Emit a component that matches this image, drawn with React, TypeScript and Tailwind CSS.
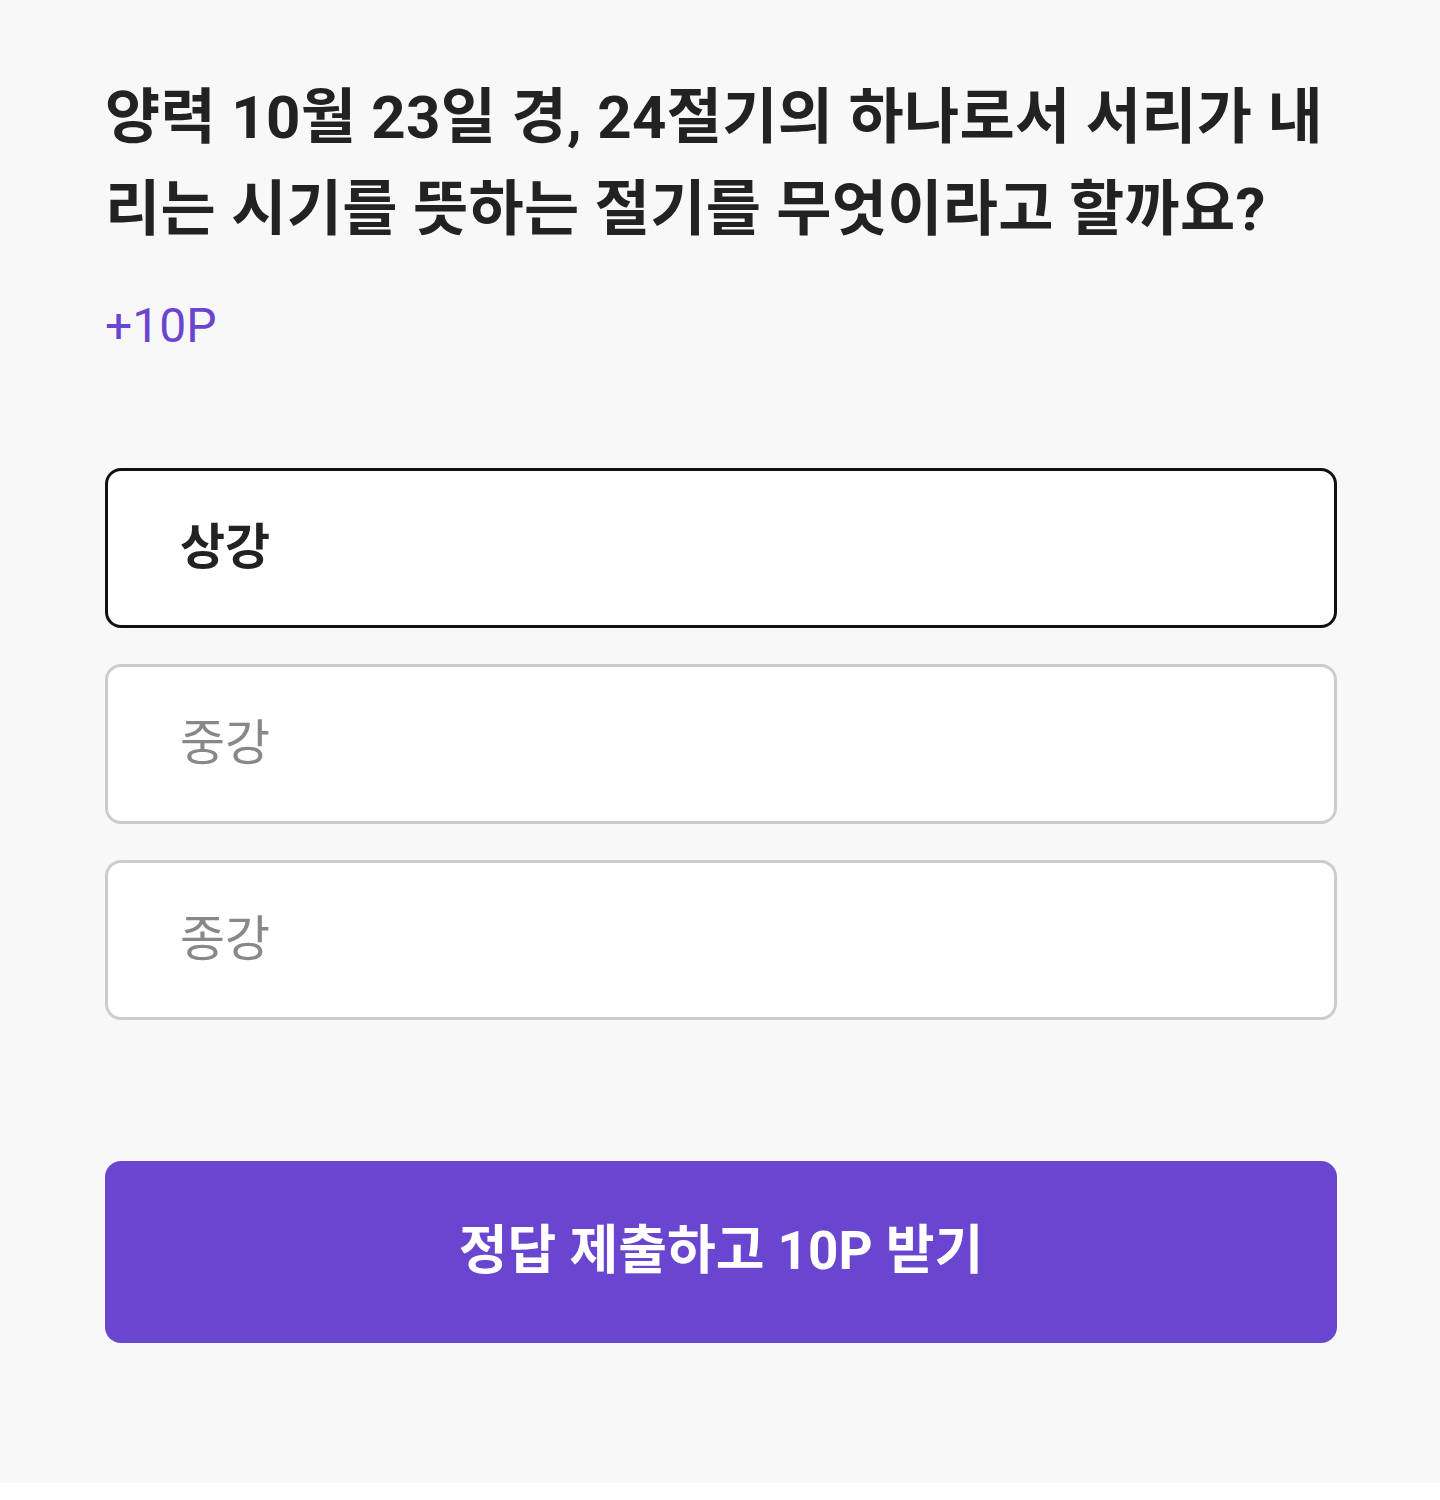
import React from "react";

const font = { fontFamily: 'Roboto, "Noto Sans CJK KR", sans-serif' };

export default function App() {
  const options = [
    { label: "상강", selected: true },
    { label: "중강", selected: false },
    { label: "종강", selected: false },
  ];
  return (
    <div className="bg-white">
      <div
        className="bg-[#f8f8f9] pl-[105px] pr-[103px] pt-[72px] pb-[140px]"
        style={font}
      >
        <h1 className="text-[60px] leading-[92px] font-bold text-[#222222] tracking-[0.3px]">
          양력 10월 23일 경, 24절기의 하나로서 서리가 내리는 시기를 뜻하는 절기를 무엇이라고 할까요?
        </h1>
        <div className="mt-[42px] text-[48px] leading-[56px] text-[#6a45d0]">+10P</div>
        <div className="mt-[114px] flex flex-col gap-[36px]">
          {options.map((o) => (
            <div
              key={o.label}
              className={
                o.selected
                  ? "h-[160px] rounded-[16px] border-[3px] border-[#111111] bg-white flex items-center pl-[72px]"
                  : "h-[160px] rounded-[16px] border-[3px] border-[#cccccc] bg-white flex items-center pl-[72px]"
              }
            >
              <span
                className={
                  o.selected
                    ? "text-[49px] font-bold text-[#222222]"
                    : "text-[49px] font-normal text-[#888888]"
                }
              >
                {o.label}
              </span>
            </div>
          ))}
        </div>
        <button className="mt-[141px] w-full h-[182px] rounded-[16px] bg-[#6a45d0] text-white text-[53px] font-bold flex items-center justify-center">
          정답 제출하고 10P 받기
        </button>
      </div>
    </div>
  );
}
